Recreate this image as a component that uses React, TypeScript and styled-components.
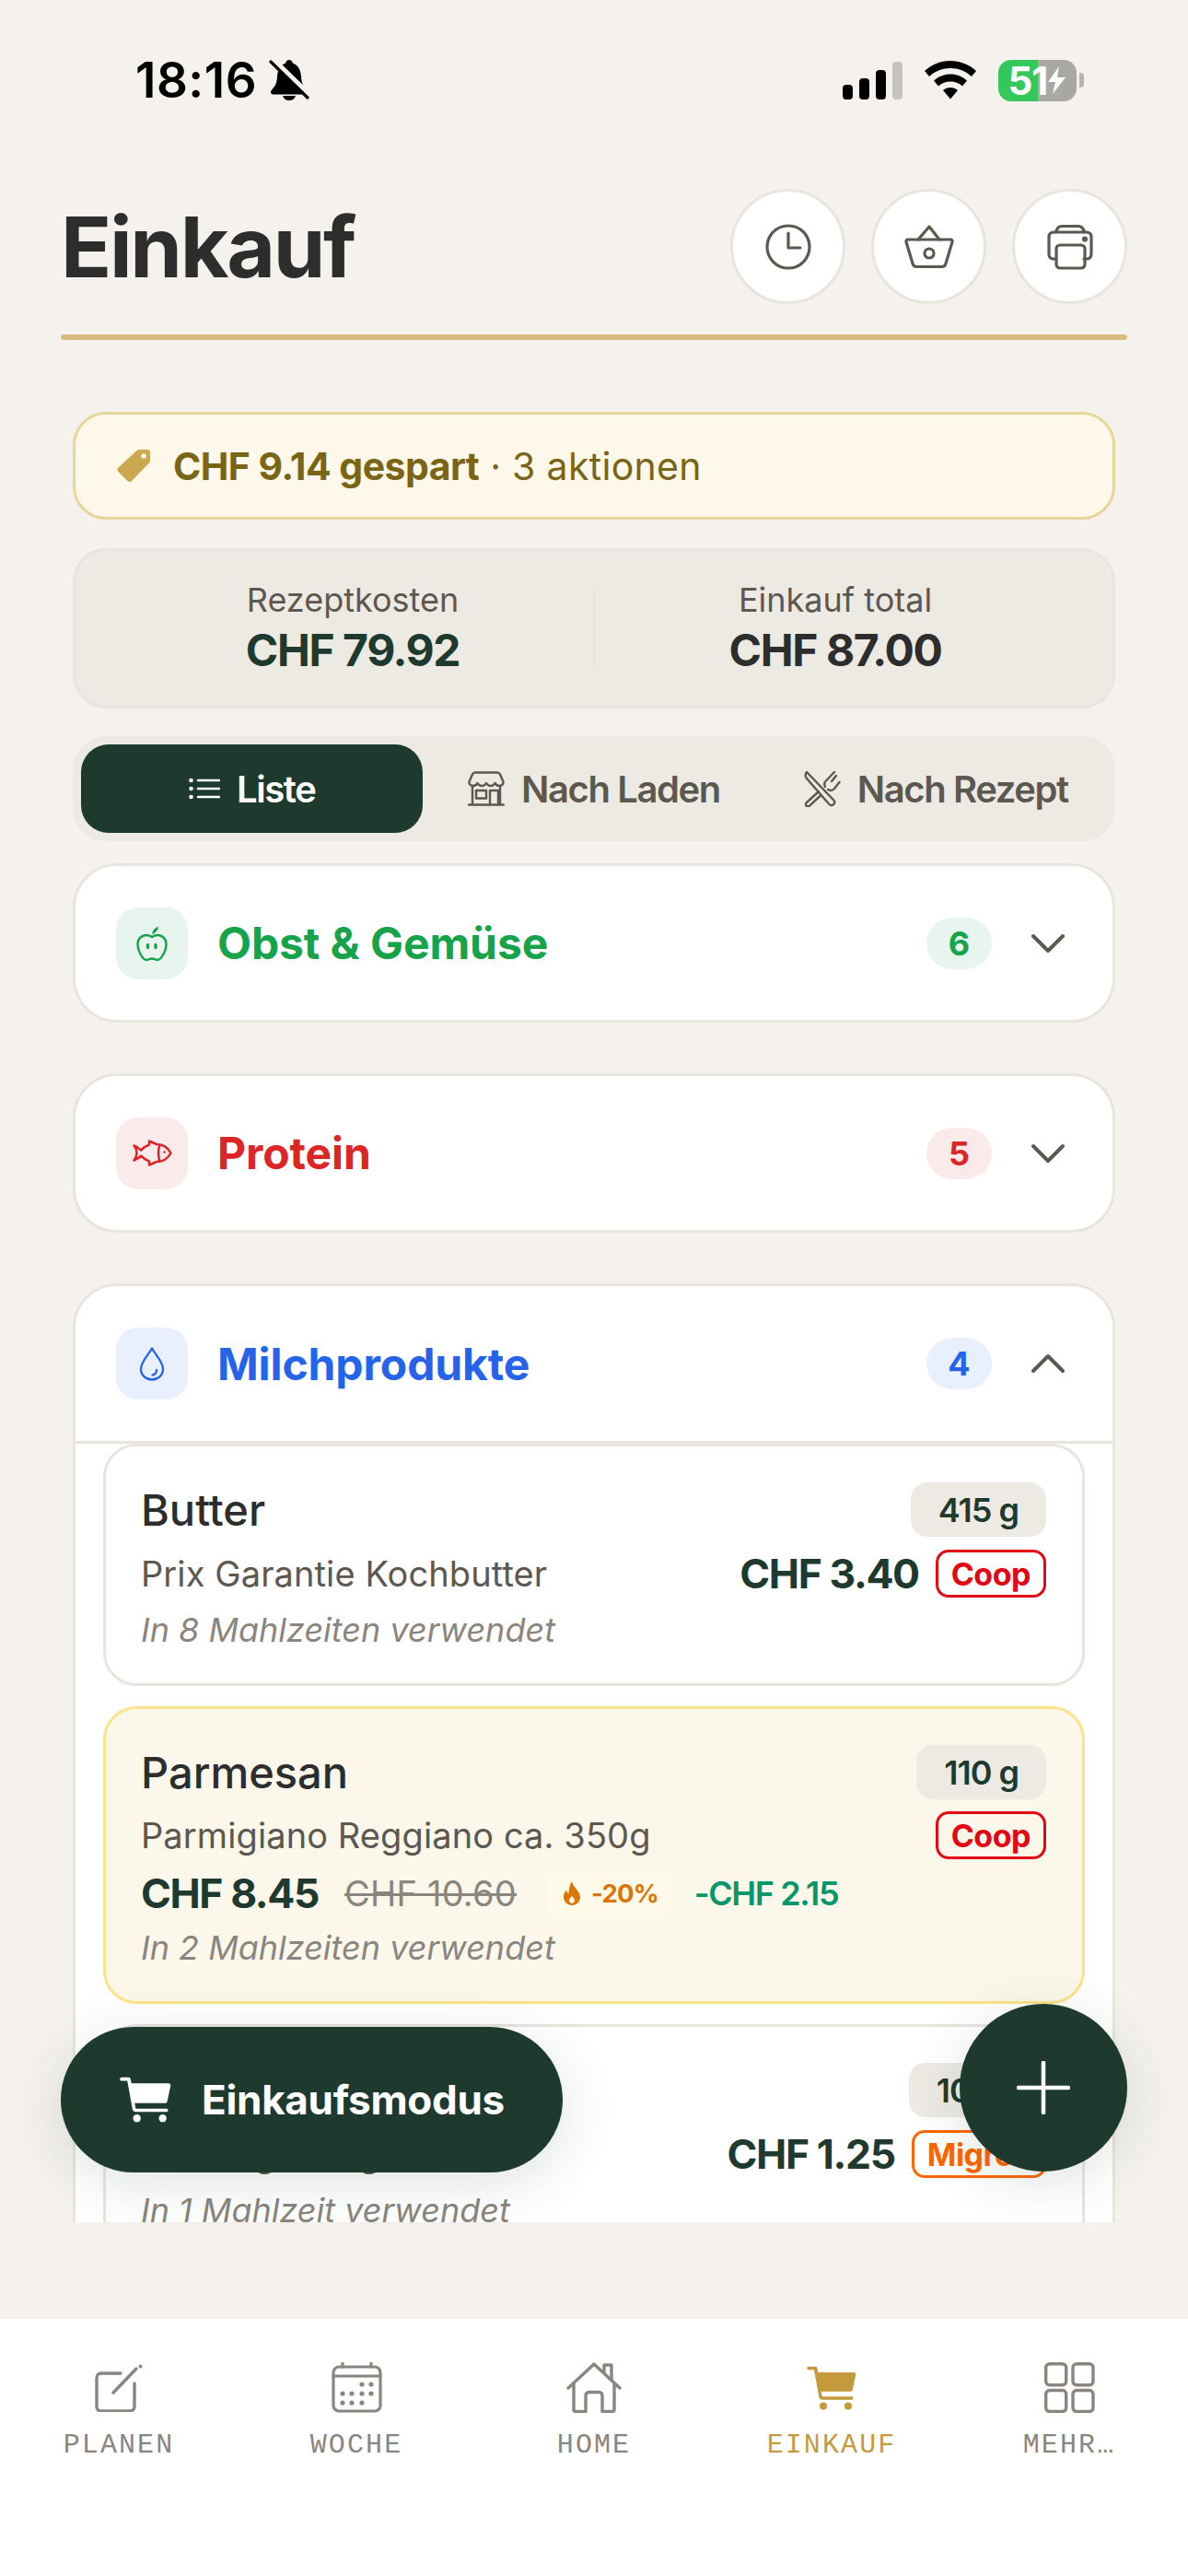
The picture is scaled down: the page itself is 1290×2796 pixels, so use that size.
import React from 'react';
import styled, { createGlobalStyle } from 'styled-components';

const GREEN = '#1e3a2f';
const BORDER = '#e8e5df';
const MUTED = '#5c5850';
const NAV_GREY = '#8a857e';
const GOLD = '#c49a3c';

const GlobalStyle = createGlobalStyle`
  html, body {
    margin: 0;
    padding: 0;
    background: #f5f2ed;
  }
  * {
    box-sizing: border-box;
  }
  body {
    font-family: Inter, "Noto Sans", sans-serif;
  }
`;

const Cart = ({ color, width, height }: { color: string; width: number; height: number }) => (
  <svg width={width} height={height} viewBox="0 0 54 48">
    <path d="M2 2.5h7.5l1 4.5" fill="none" stroke={color} strokeWidth="3.6" strokeLinecap="round" strokeLinejoin="round" />
    <path d="M10 7h41c1.6 0 2.5 1.2 2.2 2.7l-3.4 16c-.3 1.3-1.2 2-2.5 2H14.5z" fill={color} />
    <path d="M10 6l5 27.5c.2 1 1 1.5 2 1.5h32" fill="none" stroke={color} strokeWidth="3.4" strokeLinecap="round" />
    <circle cx="18" cy="43.5" r="4" fill={color} />
    <circle cx="45" cy="43.5" r="4" fill={color} />
  </svg>
);

const ClockIcon = () => (
  <svg width="50" height="50" viewBox="0 0 50 50" fill="none" stroke={MUTED} strokeWidth="3.2" strokeLinecap="round" strokeLinejoin="round">
    <circle cx="25" cy="25" r="23" />
    <path d="M25 10v16h13" />
  </svg>
);

const BasketIcon = () => (
  <svg width="54" height="48" viewBox="0 0 54 48" fill="none" stroke={MUTED} strokeWidth="3.2" strokeLinecap="round" strokeLinejoin="round">
    <path d="M15 16L27 2l11 14" />
    <path d="M4 16h46c1.5 0 2.4 1.2 2 2.6l-7 23.4c-.6 2-2 3.5-4 3.5H13c-2 0-3.4-1.500-4-3.500L2 18.600C1.600 17.200 2.500 16 4 16z" />
    <circle cx="27" cy="31" r="5" />
  </svg>
);

const PrinterIcon = () => (
  <svg width="50" height="50" viewBox="0 0 50 50" fill="none" stroke={MUTED} strokeWidth="3.2" strokeLinecap="round" strokeLinejoin="round">
    <path d="M10 9c0-4 3-6.500 6-6.500h18c3 0 6 2.500 6 6.500" />
    <path d="M10 38H7c-3 0-5-2-5-5V14c0-3 2-5 5-5h36c3 0 5 2 5 5v19c0 3-2 5-5 5h-3" />
    <rect x="10" y="23" width="31" height="25" rx="4" />
    <circle cx="41" cy="16.500" r="1.500" fill={MUTED} />
  </svg>
);

const TagIcon = () => (
  <svg width="38" height="38" viewBox="0 0 38 38">
    <path d="M22 2.500C23 1.500 24 1 25.500 1H34c1.700 0 3 1.300 3 3v8.500c0 1.500-.5 2.500-1.500 3.500L17 35c-1.300 1.300-3.200 1.300-4.500 0L2.500 25c-1.300-1.300-1.300-3.200 0-4.500z" fill="#c9a84f" />
    <circle cx="30" cy="8" r="2.800" fill="#fdf8ea" />
  </svg>
);

const ListIcon = () => (
  <svg width="34" height="24" viewBox="0 0 34 24" stroke="#fff" strokeWidth="2.600" strokeLinecap="round">
    <path d="M10 3h23M10 12h23M10 21h23" />
    <circle cx="2.500" cy="3" r="2.300" fill="#fff" stroke="none" />
    <circle cx="2.500" cy="12" r="2.300" fill="#fff" stroke="none" />
    <circle cx="2.500" cy="21" r="2.300" fill="#fff" stroke="none" />
  </svg>
);

const StoreIcon = () => (
  <svg width="40" height="38" viewBox="0 0 40 38" fill="none" stroke={MUTED} strokeWidth="2.400" strokeLinecap="round" strokeLinejoin="round">
    <path d="M8 1.500h24c1.500 0 2.500.8 3 2l3.500 8c.4 3-2 4.500-4.500 4.500-2 0-3.400-1.200-4.500-3-1 1.800-2.700 3-4.800 3s-3.700-1.200-4.700-3c-1 1.800-2.600 3-4.700 3s-3.800-1.200-4.800-3C9.400 14.800 8 16 6 16c-2.500 0-4.900-1.500-4.500-4.500l3.500-8c.5-1.200 1.500-2 3-2z" />
    <path d="M5 16v20M35 16v20M1 36.500h38" />
    <rect x="9" y="21" width="11" height="8.500" />
    <path d="M24 36v-15h9v15" />
  </svg>
);

const CutleryIcon = () => (
  <svg width="40" height="40" viewBox="0 0 40 40" fill="none" stroke={MUTED} strokeWidth="2.400" strokeLinecap="round" strokeLinejoin="round">
    <path d="M3 2c-1.500 2-1.500 5 0 7l24 27.500c1.500 1.700 3.500 2 5 .8 1.600-1.300 1.600-3.300.3-4.800L3 2z" />
    <path d="M16 23L3 35c-1.500 1.400-1.300 2.900-.3 3.700 1.200.9 2.400.8 3.600-.3L18.500 27" />
    <path d="M23 18c-1.500-3-1-4.500.5-6L33 2M26 21c2.500 1.500 5 1 7-1l5.500-7M30 12l5-6" />
  </svg>
);

const AppleIcon = () => (
  <svg width="34" height="40" viewBox="0 0 34 40" fill="none" stroke="#16a34a" strokeWidth="2.400" strokeLinecap="round" strokeLinejoin="round">
    <path d="M17 13c-3-2-6-2.500-9-1.500C3.500 13 1.500 17 1.500 21c0 6 3 11 5.500 14.500 2 2.500 4 3 6 2 2.500-1.200 5.500-1.200 8 0 2 1 4 .5 6-2C29.500 32 32.500 27 32.500 21c0-4-2-8-6.500-9.500-3-1-6-.5-9 1.500z" />
    <path d="M17 10c.5-4 3-7 7-8.500-.3 4-3 7.500-7 8.500z" fill="#16a34a" stroke="none" />
    <ellipse cx="12.500" cy="23" rx="1.700" ry="3.300" fill="#16a34a" stroke="none" />
    <ellipse cx="21" cy="23" rx="1.700" ry="3.300" fill="#16a34a" stroke="none" />
  </svg>
);

const FishIcon = () => (
  <svg width="43" height="29" viewBox="0 0 43 29" fill="none" stroke="#dc2626" strokeWidth="2.500" strokeLinecap="round" strokeLinejoin="round">
    <path d="M1.500 6.500C4.500 7.500 7 9 9 11.500 12 8.500 15 6.500 18 5.500L18 1.500 26 5c7 0 12.500 4 15.500 9.500C38.500 20 33 24 26 24l-8 3.500V23.500c-3-1-6-3-9-6-2 2.500-4.500 4-7.500 5 2-2.500 3-5 3-8s-1-5.500-3-8z" />
    <path d="M29.500 5.500c-2 5-2 13 0 18" />
    <circle cx="34.500" cy="13.500" r="1.300" fill="#dc2626" stroke="none" />
  </svg>
);

const DropIcon = () => (
  <svg width="28" height="37" viewBox="0 0 28 37" fill="none" stroke="#2563eb" strokeWidth="2.300" strokeLinecap="round" strokeLinejoin="round">
    <path d="M14 1.500C10 9 2 16 2 24c0 6.500 5.300 11.500 12 11.500S26 30.500 26 24C26 16 18 9 14 1.500z" />
    <path d="M19 25c0 3-2 5-4.500 5.500" />
  </svg>
);

const Chevron = ({ up }: { up?: boolean }) => (
  <svg width="38" height="24" viewBox="0 0 38 24" fill="none" stroke={MUTED} strokeWidth="4" strokeLinecap="round" strokeLinejoin="round">
    <path d={up ? 'M3 20L19 4l16 16' : 'M3 4l16 16L35 4'} />
  </svg>
);

const FlameIcon = () => (
  <svg width="20" height="26" viewBox="0 0 20 26">
    <path d="M10 0c1 4 3 6 5.500 9.500C17.500 12 19 14.500 19 17c0 5-4 9-9 9s-9-4-9-9c0-3 1.300-5.500 3-7.500.3 2 1 3.300 2.500 4C6.500 9 7.500 4 10 0z" fill="#d97706" />
    <path d="M10 16c1.500 2 3 3 3 5 0 1.800-1.300 2.800-3 2.800S7 22.800 7 21c0-2 1.500-3 3-5z" fill="#fdfaea" />
  </svg>
);

const BellOffIcon = () => (
  <svg width="44" height="46" viewBox="0 0 44 46">
    <path d="M22 1c-2 0-3.500 1.500-3.800 3.500C12 7 9.500 12 9 19c-.3 5-1 8.500-3.500 11.500-2 2.500-3.500 4-3.500 5.500 0 1.500 1.200 2.500 3 2.500h34c1.800 0 3-1 3-2.500 0-1.500-1.500-3-3.500-5.500-2.500-3-3.200-6.500-3.500-11.500-.5-7-3-12-9.200-14.500C25.500 2.500 24 1 22 1z" fill="#000" />
    <path d="M15 40c.8 3 3.500 5 7 5s6.200-2 7-5z" fill="#000" />
    <path d="M4 1l39 38" stroke="#f5f2ed" strokeWidth="7" />
    <path d="M2 3l40 39" stroke="#000" strokeWidth="3.200" strokeLinecap="round" />
  </svg>
);

const WifiIcon = () => (
  <svg width="58" height="42" viewBox="0 0 58 42">
    <path d="M29 0c10.500 0 20.500 4 28 11l-5 6C45.500 11 37.500 8 29 8s-16.500 3-23 9l-5-6C8.500 4 18.500 0 29 0z" fill="#000" />
    <path d="M29 14.500c6.700 0 13 2.500 18 7l-5 6c-3.600-3.200-8.200-5-13-5s-9.400 1.800-13 5l-5-6c5-4.500 11.300-7 18-7z" fill="#000" />
    <path d="M29 29c3 0 5.800 1 8 3L29 41.500 21 32c2.200-2 5-3 8-3z" fill="#000" />
  </svg>
);

const BoltIcon = () => (
  <svg width="21" height="30" viewBox="0 0 21 30">
    <path d="M13 0L1 17h8l-3 13L20 12h-9z" fill="#fff" />
  </svg>
);

const PlanIcon = () => (
  <svg width="52" height="52" viewBox="0 0 52 52" fill="none" stroke={NAV_GREY} strokeWidth="3.400" strokeLinecap="round" strokeLinejoin="round">
    <path d="M28 10H7c-3 0-5 2-5 5v31c0 3 2 5 5 5h31c3 0 5-2 5-5V21" />
    <path d="M20 31L45 5" />
    <circle cx="49.500" cy="2.500" r="2" fill={NAV_GREY} stroke="none" />
  </svg>
);

const CalendarIcon = () => (
  <svg width="55" height="55" viewBox="0 0 55 55" fill="none" stroke={NAV_GREY} strokeWidth="3.200" strokeLinecap="round">
    <rect x="2" y="5" width="51" height="48" rx="6" />
    <path d="M2 15h51M12 1v4M43 1v4" />
    {[[33, 24], [43, 24], [12, 34], [22, 34], [33, 34], [43, 34], [12, 44], [22, 44], [33, 44]].map(([cx, cy]) => (
      <circle key={`${cx}-${cy}`} cx={cx} cy={cy} r="2.600" fill={NAV_GREY} stroke="none" />
    ))}
  </svg>
);

const HomeIcon = () => (
  <svg width="60" height="55" viewBox="0 0 60 55" fill="none" stroke={NAV_GREY} strokeWidth="3.400" strokeLinecap="round" strokeLinejoin="round">
    <path d="M2 28L30 2l28 26" />
    <path d="M8 23v28c0 1.500 1 2.500 2.500 2.500H21V36c0-2 1.500-3.500 3.500-3.500h11c2 0 3.500 1.500 3.500 3.500v17.500h10.500c1.500 0 2.500-1 2.500-2.500V23" />
    <path d="M41 11V3h8v16" />
  </svg>
);

const GridIcon = () => (
  <svg width="55" height="55" viewBox="0 0 55 55" fill="none" stroke={NAV_GREY} strokeWidth="3.400">
    <rect x="1.700" y="1.700" width="22" height="23" rx="4" />
    <rect x="31" y="1.700" width="22" height="23" rx="4" />
    <rect x="1.700" y="30.500" width="22" height="23" rx="4" />
    <rect x="31" y="30.500" width="22" height="23" rx="4" />
  </svg>
);

type Item = {
  name: string;
  qty: string;
  desc: string;
  store: 'Coop' | 'Migros';
  price: string;
  meta: string;
  oldPrice?: string;
  discount?: string;
  saved?: string;
};

const items: Item[] = [
  { name: 'Butter', qty: '415 g', desc: 'Prix Garantie Kochbutter', store: 'Coop', price: 'CHF 3.40', meta: 'In 8 Mahlzeiten verwendet' },
  {
    name: 'Parmesan',
    qty: '110 g',
    desc: 'Parmigiano Reggiano ca. 350g',
    store: 'Coop',
    price: 'CHF 8.45',
    meta: 'In 2 Mahlzeiten verwendet',
    oldPrice: 'CHF 10.60',
    discount: '-20%',
    saved: '-CHF 2.15',
  },
  { name: 'Joghurt', qty: '100 g', desc: 'M-Budget Jogurt', store: 'Migros', price: 'CHF 1.25', meta: 'In 1 Mahlzeit verwendet' },
];

const navItems = [
  { label: 'PLANEN', icon: <PlanIcon /> },
  { label: 'WOCHE', icon: <CalendarIcon /> },
  { label: 'HOME', icon: <HomeIcon /> },
  { label: 'EINKAUF', icon: <Cart color={GOLD} width={54} height={48} />, active: true },
  { label: 'MEHR…', icon: <GridIcon /> },
];

const App = () => {
  return (
    <Screen>
      <GlobalStyle />
      <StatusBar>
        <TimeGroup>
          <Time>18:16</Time>
          <BellOffIcon />
        </TimeGroup>
        <StatusIcons>
          <Signal>
            <SignalBar $h={16} />
            <SignalBar $h={23} />
            <SignalBar $h={32} />
            <SignalBar $h={41} $off />
          </Signal>
          <WifiIcon />
          <Battery>
            <BatteryBody>
              51
              <BoltIcon />
            </BatteryBody>
            <BatteryTip />
          </Battery>
        </StatusIcons>
      </StatusBar>

      <Header>
        <Title>Einkauf</Title>
        <HeaderButtons>
          <RoundButton><ClockIcon /></RoundButton>
          <RoundButton><BasketIcon /></RoundButton>
          <RoundButton><PrinterIcon /></RoundButton>
        </HeaderButtons>
      </Header>
      <HeaderLine />

      <Scroller>
        <SavingsBanner>
          <TagIcon />
          <SavingsText>
            <strong>CHF 9.14 gespart</strong> · 3 aktionen
          </SavingsText>
        </SavingsBanner>

        <Totals>
          <TotalCell>
            <TotalLabel>Rezeptkosten</TotalLabel>
            <TotalValue $color={GREEN}>CHF 79.92</TotalValue>
          </TotalCell>
          <TotalDivider />
          <TotalCell>
            <TotalLabel>Einkauf total</TotalLabel>
            <TotalValue $color="#2d2d2d">CHF 87.00</TotalValue>
          </TotalCell>
        </Totals>

        <Tabs>
          <Tab $active><ListIcon />Liste</Tab>
          <Tab><StoreIcon />Nach Laden</Tab>
          <Tab><CutleryIcon />Nach Rezept</Tab>
        </Tabs>

        <Section>
          <SectionHead>
            <SectionIcon $bg="#e8f5ee"><AppleIcon /></SectionIcon>
            <SectionTitle $color="#16a34a">Obst &amp; Gemüse</SectionTitle>
            <CountBadge $bg="#e8f5ee" $color="#16a34a">6</CountBadge>
            <Chevron />
          </SectionHead>
        </Section>

        <Section>
          <SectionHead>
            <SectionIcon $bg="#fbeaea"><FishIcon /></SectionIcon>
            <SectionTitle $color="#dc2626">Protein</SectionTitle>
            <CountBadge $bg="#fbeaea" $color="#dc2626">5</CountBadge>
            <Chevron />
          </SectionHead>
        </Section>

        <Section>
          <SectionHead $open>
            <SectionIcon $bg="#e8effd"><DropIcon /></SectionIcon>
            <SectionTitle $color="#2563eb">Milchprodukte</SectionTitle>
            <CountBadge $bg="#e8effd" $color="#2563eb">4</CountBadge>
            <Chevron up />
          </SectionHead>
          <ItemList>
            {items.map((item) => (
              <ItemCard key={item.name} $deal={!!item.oldPrice}>
                <ItemRow>
                  <ItemName>{item.name}</ItemName>
                  <Qty>{item.qty}</Qty>
                </ItemRow>
                <ItemRow>
                  <ItemDesc>{item.desc}</ItemDesc>
                  <PriceStore>
                    {!item.oldPrice && <Price>{item.price}</Price>}
                    <StoreBadge $color={item.store === 'Coop' ? '#e30613' : '#ff6600'}>{item.store}</StoreBadge>
                  </PriceStore>
                </ItemRow>
                {item.oldPrice && (
                  <DealRow>
                    <Price>{item.price}</Price>
                    <OldPrice>{item.oldPrice}</OldPrice>
                    <DiscountBadge><FlameIcon />{item.discount}</DiscountBadge>
                    <Saved>{item.saved}</Saved>
                  </DealRow>
                )}
                <Meta $deal={!!item.oldPrice}>{item.meta}</Meta>
              </ItemCard>
            ))}
          </ItemList>
        </Section>
      </Scroller>

      <ShopModeButton>
        <Cart color="#fff" width={56} height={50} />
        Einkaufsmodus
      </ShopModeButton>
      <AddButton>
        <svg width="58" height="58" viewBox="0 0 58 58" stroke="#fff" strokeWidth="4.500" strokeLinecap="round">
          <path d="M29 2v54M2 29h54" />
        </svg>
      </AddButton>

      <BottomNav>
        {navItems.map((nav) => (
          <NavItem key={nav.label}>
            <NavIconBox>{nav.icon}</NavIconBox>
            <NavLabel $active={nav.active}>{nav.label}</NavLabel>
          </NavItem>
        ))}
      </BottomNav>
    </Screen>
  );
};

export default App;

const Screen = styled.div`
  position: relative;
  width: 1290px;
  height: 2796px;
  overflow: hidden;
  background: #f5f2ed;
  display: flex;
  flex-direction: column;
`;

const StatusBar = styled.div`
  height: 205px;
  padding: 62px 113px 0 147px;
  display: flex;
  justify-content: space-between;
  align-items: flex-start;
`;

const TimeGroup = styled.div`
  display: flex;
  align-items: center;
  gap: 13px;
  height: 50px;
`;

const Time = styled.span`
  font-size: 53px;
  font-weight: 600;
  color: #000;
  letter-spacing: 0.5px;
`;

const StatusIcons = styled.div`
  display: flex;
  align-items: center;
  gap: 23px;
  height: 50px;
`;

const Signal = styled.div`
  display: flex;
  align-items: flex-end;
  gap: 7px;
  height: 42px;
`;

const SignalBar = styled.div<{ $h: number; $off?: boolean }>`
  width: 11px;
  height: ${(p) => p.$h}px;
  border-radius: 4px;
  background: ${(p) => (p.$off ? '#c5c3bd' : '#000')};
`;

const Battery = styled.div`
  display: flex;
  align-items: center;
  gap: 3px;
`;

const BatteryBody = styled.div`
  width: 85px;
  height: 45px;
  border-radius: 14px;
  background: linear-gradient(to right, #34c759 0 43px, #a9a8a3 43px);
  color: #fff;
  font-size: 42px;
  font-weight: 700;
  letter-spacing: -1px;
  display: flex;
  align-items: center;
  justify-content: center;
`;

const BatteryTip = styled.div`
  width: 5px;
  height: 16px;
  border-radius: 0 4px 4px 0;
  background: #b5b4af;
`;

const Header = styled.div`
  height: 125px;
  padding: 0 66px;
  display: flex;
  align-items: center;
  justify-content: space-between;
`;

const Title = styled.h1`
  margin: 0;
  font-size: 91px;
  font-weight: 700;
  color: #2d2d2d;
  letter-spacing: -2.3px;
`;

const HeaderButtons = styled.div`
  display: flex;
  gap: 28px;
`;

const RoundButton = styled.div`
  width: 125px;
  height: 125px;
  border-radius: 50%;
  background: #fff;
  border: 3px solid ${BORDER};
  display: flex;
  align-items: center;
  justify-content: center;
`;

const HeaderLine = styled.div`
  height: 6px;
  margin: 33px 66px 0;
  border-radius: 3px;
  background: #d9bb82;
`;

const Scroller = styled.div`
  height: 1965px;
  margin: 78px 79px 0;
  overflow: hidden;
  display: flex;
  flex-direction: column;
`;

const SavingsBanner = styled.div`
  flex: none;
  height: 117px;
  padding: 0 44px;
  background: #fdf8ea;
  border: 3px solid #e8d59a;
  border-radius: 36px;
  display: flex;
  align-items: center;
  gap: 24px;
`;

const SavingsText = styled.div`
  font-size: 41px;
  letter-spacing: 0.3px;
  color: #7a6415;
  strong {
    font-weight: 700;
    letter-spacing: -0.55px;
  }
`;

const Totals = styled.div`
  flex: none;
  height: 174px;
  margin-top: 31px;
  padding: 0 40px;
  background: #edeae4;
  border: 3px solid ${BORDER};
  border-radius: 36px;
  display: flex;
  align-items: center;
`;

const TotalCell = styled.div`
  flex: 1;
  display: flex;
  flex-direction: column;
  align-items: center;
  gap: 4px;
`;

const TotalLabel = styled.div`
  font-size: 36px;
  line-height: 44px;
  color: ${MUTED};
`;

const TotalValue = styled.div<{ $color: string }>`
  font-size: 48px;
  line-height: 58px;
  font-weight: 700;
  letter-spacing: -1.4px;
  color: ${(p) => p.$color};
`;

const TotalDivider = styled.div`
  width: 2px;
  height: 84px;
  background: #e6e3dc;
`;

const Tabs = styled.div`
  flex: none;
  height: 114px;
  margin-top: 30px;
  padding: 9px;
  background: #edeae4;
  border-radius: 36px;
  display: grid;
  grid-template-columns: repeat(3, 1fr);
`;

const Tab = styled.div<{ $active?: boolean }>`
  border-radius: 30px;
  display: flex;
  align-items: center;
  justify-content: center;
  gap: 18px;
  font-size: 40px;
  font-weight: 600;
  letter-spacing: -1.4px;
  white-space: nowrap;
  color: ${(p) => (p.$active ? '#fff' : MUTED)};
  background: ${(p) => (p.$active ? GREEN : 'transparent')};
`;

const Section = styled.div`
  flex: none;
  margin-top: 24px;
  background: #fff;
  border: 3px solid ${BORDER};
  border-radius: 48px;
  & + & {
    margin-top: 55px;
  }
`;

const SectionHead = styled.div<{ $open?: boolean }>`
  height: ${(p) => (p.$open ? 171 : 167)}px;
  padding: 0 51px 0 44px;
  display: flex;
  align-items: center;
  border-bottom: ${(p) => (p.$open ? `3px solid ${BORDER}` : 'none')};
`;

const SectionIcon = styled.div<{ $bg: string }>`
  width: 78px;
  height: 78px;
  border-radius: 24px;
  background: ${(p) => p.$bg};
  display: flex;
  align-items: center;
  justify-content: center;
`;

const SectionTitle = styled.div<{ $color: string }>`
  flex: 1;
  margin-left: 32px;
  font-size: 48px;
  font-weight: 700;
  letter-spacing: -0.1px;
  color: ${(p) => p.$color};
`;

const CountBadge = styled.div<{ $bg: string; $color: string }>`
  width: 71px;
  height: 56px;
  margin-right: 42px;
  border-radius: 28px;
  background: ${(p) => p.$bg};
  color: ${(p) => p.$color};
  font-size: 36px;
  font-weight: 700;
  display: flex;
  align-items: center;
  justify-content: center;
`;

const ItemList = styled.div`
  padding: 0 30px;
  display: flex;
  flex-direction: column;
  gap: 22px;
`;

const ItemCard = styled.div<{ $deal?: boolean }>`
  padding: 39px 39px 36px 38px;
  border-radius: 36px;
  border: 3px solid ${(p) => (p.$deal ? '#fce28a' : BORDER)};
  background: ${(p) => (p.$deal ? '#fbf7eb' : '#fff')};
  display: flex;
  flex-direction: column;
  gap: 13px;
`;

const ItemRow = styled.div`
  display: flex;
  align-items: center;
  justify-content: space-between;
`;

const ItemName = styled.div`
  font-size: 47px;
  font-weight: 500;
  color: #2d2d2d;
`;

const Qty = styled.div`
  height: 59px;
  padding: 0 30px;
  border-radius: 18px;
  background: #edeae4;
  color: ${GREEN};
  font-size: 36px;
  font-weight: 600;
  letter-spacing: -1px;
  display: flex;
  align-items: center;
`;

const ItemDesc = styled.div`
  font-size: 38px;
  letter-spacing: 0.1px;
  color: ${MUTED};
`;

const PriceStore = styled.div`
  display: flex;
  align-items: center;
  gap: 18px;
`;

const Price = styled.div`
  font-size: 44.5px;
  font-weight: 700;
  letter-spacing: -1.4px;
  color: ${GREEN};
`;

const StoreBadge = styled.div<{ $color: string }>`
  height: 52px;
  padding: 0 14px;
  border: 3px solid ${(p) => p.$color};
  border-radius: 14px;
  color: ${(p) => p.$color};
  font-size: 34px;
  font-weight: 700;
  letter-spacing: -0.5px;
  display: flex;
  align-items: center;
`;

const DealRow = styled.div`
  height: 48px;
  display: flex;
  align-items: center;
`;

const OldPrice = styled.div`
  margin-left: 28px;
  font-size: 38px;
  letter-spacing: 0.2px;
  color: #8a857e;
  text-decoration: line-through;
`;

const DiscountBadge = styled.div`
  height: 48px;
  margin-left: 32px;
  padding: 0 15px 0 18px;
  border-radius: 12px;
  background: #fdfaea;
  color: #d97706;
  font-size: 27.5px;
  font-weight: 700;
  letter-spacing: -0.8px;
  display: flex;
  align-items: center;
  gap: 11px;
`;

const Saved = styled.div`
  margin-left: 24px;
  color: #059669;
  font-size: 36px;
  font-weight: 600;
  letter-spacing: -1.4px;
`;

const Meta = styled.div<{ $deal?: boolean }>`
  margin-top: ${(p) => (p.$deal ? 0 : -1)}px;
  font-size: 36px;
  line-height: 44px;
  font-style: italic;
  color: #8a857e;
`;

const ShopModeButton = styled.div`
  position: absolute;
  left: 66px;
  top: 2200px;
  width: 545px;
  height: 158px;
  padding-left: 64px;
  border-radius: 79px;
  background: ${GREEN};
  color: #fff;
  font-size: 44px;
  font-weight: 700;
  letter-spacing: -0.3px;
  display: flex;
  align-items: center;
  gap: 33px;
  box-shadow: 0 12px 60px rgba(30, 58, 47, 0.14);
`;

const AddButton = styled.div`
  position: absolute;
  left: 1042px;
  top: 2175px;
  width: 182px;
  height: 182px;
  border-radius: 50%;
  background: ${GREEN};
  display: flex;
  align-items: center;
  justify-content: center;
  box-shadow: 0 12px 60px rgba(30, 58, 47, 0.14);
`;

const BottomNav = styled.nav`
  position: relative;
  margin-top: 105px;
  height: 279px;
  background: #fff;
  display: grid;
  grid-template-columns: repeat(5, 1fr);
  align-items: start;
  padding-top: 47px;
`;

const NavItem = styled.div`
  display: flex;
  flex-direction: column;
  align-items: center;
`;

const NavIconBox = styled.div`
  height: 55px;
  display: flex;
  align-items: center;
  justify-content: center;
`;

const NavLabel = styled.div<{ $active?: boolean }>`
  margin-top: 17px;
  font-family: "Liberation Mono", "DejaVu Sans Mono", monospace;
  font-size: 30px;
  line-height: 36px;
  letter-spacing: 2.100px;
  color: ${(p) => (p.$active ? GOLD : NAV_GREY)};
`;
